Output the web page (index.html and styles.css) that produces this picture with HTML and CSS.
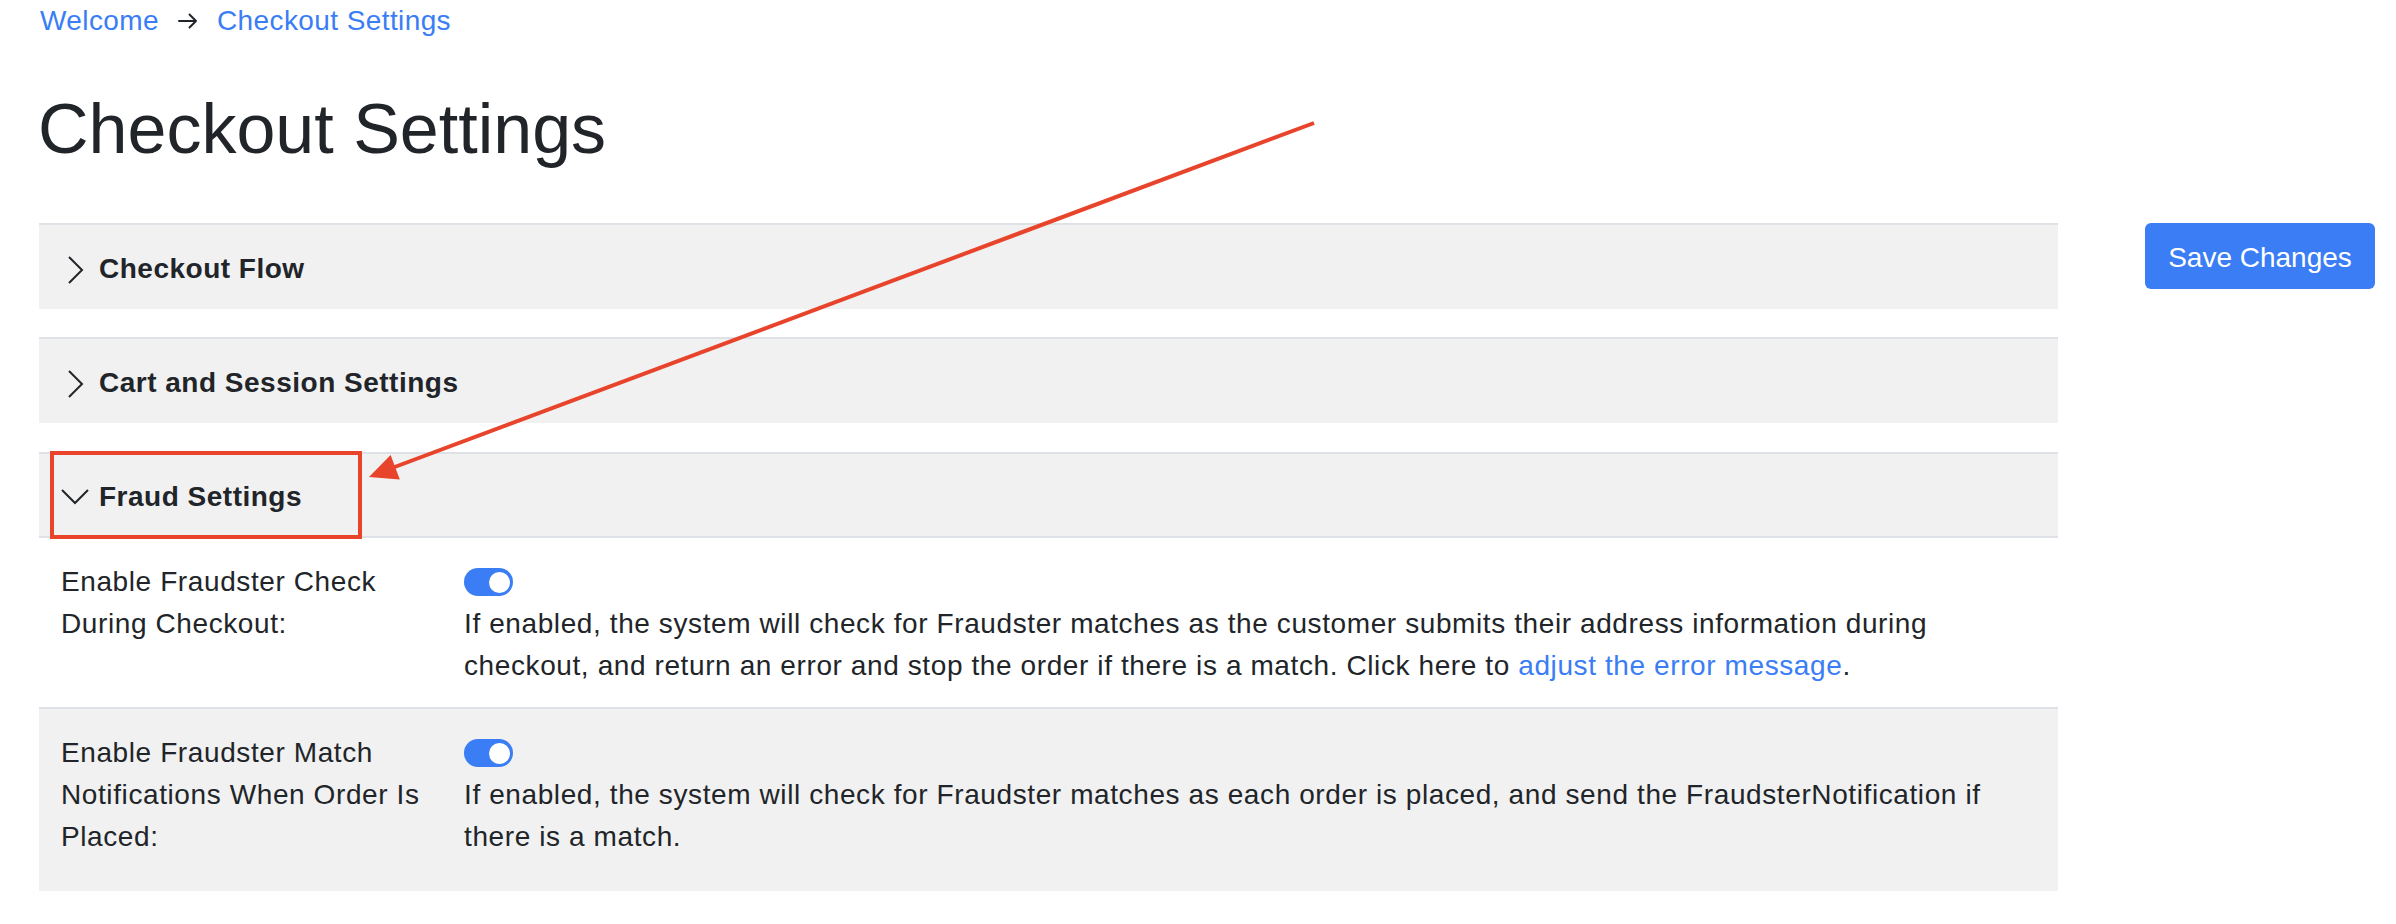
FILE: index.html
```html
<!DOCTYPE html>
<html lang="en">
<head>
<meta charset="utf-8">
<title>Checkout Settings</title>
<link rel="stylesheet" href="styles.css">
</head>
<body>
<div class="page">
  <nav class="breadcrumb">
    <a href="#" class="crumb">Welcome</a>
    <svg class="crumb-arrow" width="20" height="16" viewBox="0 0 20 16" aria-hidden="true">
      <path d="M1 8 H18 M11.5 1.5 L18 8 L11.5 14.5" fill="none" stroke="#212529" stroke-width="2" stroke-linecap="round" stroke-linejoin="round"/>
    </svg>
    <a href="#" class="crumb">Checkout Settings</a>
  </nav>

  <h1 class="title">Checkout Settings</h1>

  <div class="layout">
    <div class="accordion">
      <section class="acc-item">
        <div class="acc-header">
          <svg class="chev" width="26" height="36" viewBox="0 0 26 36" aria-hidden="true">
            <path d="M7 8 L20 21 L7 34" fill="none" stroke="#212529" stroke-width="2"/>
          </svg>
          <span class="acc-title">Checkout Flow</span>
        </div>
      </section>

      <section class="acc-item">
        <div class="acc-header">
          <svg class="chev" width="26" height="36" viewBox="0 0 26 36" aria-hidden="true">
            <path d="M7 8 L20 21 L7 34" fill="none" stroke="#212529" stroke-width="2"/>
          </svg>
          <span class="acc-title">Cart and Session Settings</span>
        </div>
      </section>

      <section class="acc-item open">
        <div class="acc-header">
          <svg class="chev" width="26" height="36" viewBox="0 0 26 36" aria-hidden="true">
            <path d="M0 13 L13 26 L26 13" fill="none" stroke="#212529" stroke-width="2"/>
          </svg>
          <span class="acc-title">Fraud Settings</span>
        </div>
        <div class="acc-body">
          <div class="setting-row">
            <div class="setting-label">Enable Fraudster Check During Checkout:</div>
            <div class="setting-control">
              <div class="switch-line"><span class="switch on"><span class="knob"></span></span></div>
              <p class="setting-desc"><span>If enabled, the system will check for Fraudster matches as the customer submits their address information during</span> <span>checkout, and return an error and stop the order if there is a match. Click here to</span> <a href="#" class="link">adjust the error message</a><span>.</span></p>
            </div>
          </div>
          <div class="setting-row alt">
            <div class="setting-label">Enable Fraudster Match Notifications When Order Is Placed:</div>
            <div class="setting-control">
              <div class="switch-line"><span class="switch on"><span class="knob"></span></span></div>
              <p class="setting-desc">If enabled, the system will check for Fraudster matches as each order is placed, and send the FraudsterNotification if there is a match.</p>
            </div>
          </div>
        </div>
      </section>
    </div>

    <aside class="actions">
      <button class="btn-primary" type="button">Save Changes</button>
    </aside>
  </div>
</div>

<svg class="annotation" width="2396" height="924" viewBox="0 0 2396 924" aria-hidden="true">
  <rect x="52" y="453" width="308" height="84" fill="none" stroke="#e8432b" stroke-width="4"/>
  <line x1="1314" y1="123" x2="392" y2="468" stroke="#e8432b" stroke-width="4"/>
  <polygon points="369,477 390.6,455 399.8,479.4" fill="#e8432b"/>
</svg>
</body>
</html>
```

FILE: styles.css
```css
* { box-sizing: border-box; }

html, body {
  margin: 0;
  padding: 0;
  background: #ffffff;
}

body {
  font-family: "Liberation Sans", Arial, sans-serif;
  font-size: 28px;
  color: #212529;
  position: relative;
}

.page {
  padding: 0 21px 0 39px;
}

.breadcrumb {
  display: flex;
  align-items: center;
  gap: 19px;
  height: 42px;
  line-height: 42px;
  padding-left: 1px;
}

.crumb {
  color: #3a7df5;
  text-decoration: none;
  letter-spacing: 0.4px;
}

.crumb-arrow {
  display: block;
}

.title {
  margin: 45px 0 0 -1px;
  font-size: 70px;
  font-weight: 400;
  line-height: 84px;
  color: #212529;
}

.layout {
  display: flex;
  align-items: flex-start;
  gap: 87px;
  margin-top: 52px;
}

.accordion {
  flex: 0 0 2019px;
  display: flex;
  flex-direction: column;
  gap: 28px;
}

.acc-item {
  border-top: 2px solid #dee2e6;
}

.acc-item.open {
  margin-top: 1px;
}

.acc-header {
  display: flex;
  align-items: center;
  gap: 11px;
  height: 84px;
  padding-left: 23px;
  background: #f1f1f1;
}

.acc-item.open .acc-header {
  border-bottom: 2px solid #dee2e6;
}

.chev {
  display: block;
  flex: 0 0 auto;
  overflow: visible;
}

.acc-title {
  font-weight: 700;
  font-size: 28px;
  letter-spacing: 0.5px;
  padding-top: 3px;
}

.acc-body {
  background: #ffffff;
}

.setting-row {
  display: grid;
  grid-template-columns: 380px 1fr;
  column-gap: 23px;
  padding: 23px 22px 20px 22px;
  line-height: 42px;
  letter-spacing: 0.6px;
}

.setting-row.alt {
  background: #f1f1f1;
  border-top: 2px solid #dee2e6;
  padding: 23px 22px 33px 22px;
}

.setting-label {
  color: #212529;
}

.setting-control {
  max-width: 1530px;
}

.switch-line {
  height: 42px;
  display: flex;
  align-items: center;
}

.switch {
  display: flex;
  align-items: center;
  justify-content: flex-end;
  width: 49px;
  height: 28px;
  border-radius: 14px;
  background: #3a7df5;
  padding-right: 3px;
}

.knob {
  display: block;
  width: 21px;
  height: 21px;
  border-radius: 50%;
  background: #ffffff;
}

.setting-desc {
  margin: 0;
}

.link {
  color: #3a7df5;
  text-decoration: none;
}

.actions {
  flex: 0 0 auto;
}

.btn-primary {
  font-family: "Liberation Sans", Arial, sans-serif;
  font-size: 28px;
  line-height: 32px;
  color: #ffffff;
  background: #3a7df5;
  border: none;
  border-radius: 6px;
  padding: 19px 23px 15px 23px;
  width: 230px;
  cursor: pointer;
}

.annotation {
  position: absolute;
  left: 0;
  top: 0;
  pointer-events: none;
}
```
